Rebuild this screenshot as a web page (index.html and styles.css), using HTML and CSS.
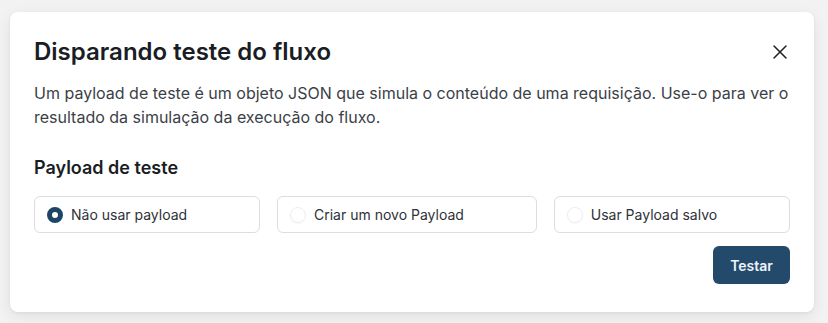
FILE: index.html
```html
<!DOCTYPE html>
<html lang="pt-BR">
<head>
<meta charset="utf-8">
<link rel="stylesheet" href="styles.css">
</head>
<body>
<div class="dialog">
  <div class="header">
    <h2 class="title">Disparando teste do fluxo</h2>
    <button class="close" aria-label="Fechar">
      <svg width="16" height="16" viewBox="0 0 16 16" fill="none" stroke="#1f1f1f" stroke-width="1.5" stroke-linecap="round"><path d="M2 2 14 14M14 2 2 14"/></svg>
    </button>
  </div>
  <p class="desc">Um payload de teste é um objeto JSON que simula o conteúdo de uma requisição. Use-o para ver o resultado da simulação da execução do fluxo.</p>
  <h3 class="section">Payload de teste</h3>
  <div class="options">
    <label class="option"><span class="radio checked"></span><span>Não usar payload</span></label>
    <label class="option"><span class="radio"></span><span>Criar um novo Payload</span></label>
    <label class="option"><span class="radio"></span><span>Usar Payload salvo</span></label>
  </div>
  <div class="footer">
    <button class="primary">Testar</button>
  </div>
</div>
</body>
</html>
```

FILE: styles.css
```css
* { box-sizing: border-box; }
html, body { margin: 0; }
body {
  background: #f2f2f2;
  font-family: Inter, "Noto Sans", sans-serif;
  color: #1c1f26;
  padding: 12px 0 0 10px;
  height: 323px;
}
.dialog {
  width: 804px;
  height: 300px;
  background: #fff;
  border-radius: 8px;
  box-shadow: 0 4px 14px rgba(0,0,0,0.08), 0 1px 3px rgba(0,0,0,0.05);
  padding: 24px 24px 0 24px;
}
.header {
  display: flex;
  align-items: center;
  justify-content: space-between;
}
.title {
  margin: 0;
  font-size: 24px;
  line-height: 32px;
  font-weight: 600;
  color: #1a1d24;
}
.close {
  border: 0;
  background: none;
  padding: 0;
  margin-right: 2px;
  width: 16px;
  height: 16px;
  display: flex;
}
.desc {
  margin: 13px 0 0;
  font-size: 16px;
  line-height: 24px;
  color: #3b3f47;
}
.section {
  margin: 27px 0 0;
  font-size: 18px;
  line-height: 24px;
  font-weight: 600;
  color: #1a1d24;
}
.options {
  display: flex;
  gap: 17px;
  margin-top: 16px;
}
.option {
  flex: 1 1 auto;
  display: flex;
  align-items: center;
  gap: 8px;
  height: 37px;
  padding: 0 12px;
  border: 1px solid #dcdde0;
  border-radius: 6px;
  font-size: 14px;
  color: #2e3138;
}
.radio {
  width: 16px;
  height: 16px;
  border-radius: 50%;
  border: 1px solid #eceded;
  box-shadow: 0 1px 2px rgba(0,0,0,0.04);
  flex: none;
}
.radio.checked {
  border: 5px solid #1f4566;
  background: #fff;
  box-shadow: none;
}
.footer {
  display: flex;
  justify-content: flex-end;
  margin-top: 13px;
}
.primary {
  background: #234a6b;
  color: #eef3f8;
  border: 0;
  border-radius: 6px;
  height: 38px;
  width: 77px;
  font-family: inherit;
  font-size: 14px;
  font-weight: 600;
}
```
